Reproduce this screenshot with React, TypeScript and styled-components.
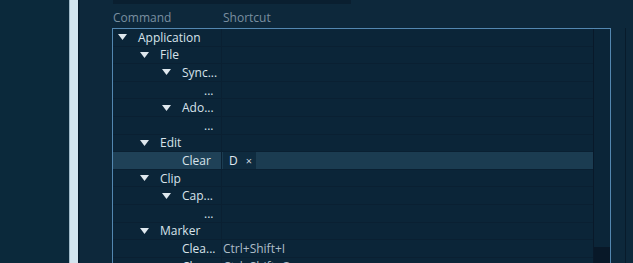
import React from "react";
import styled, { createGlobalStyle } from "styled-components";

const GlobalStyle = createGlobalStyle`
  html, body {
    margin: 0;
    padding: 0;
    background: #0b293b;
    overflow: hidden;
  }
  body {
    font-family: "Open Sans", "Noto Sans", sans-serif;
    font-size: 12px;
  }
`;

const Page = styled.div`
  display: flex;
  width: 633px;
  height: 263px;
  overflow: hidden;
`;

const LeftPane = styled.div`
  width: 69px;
  background: #0b293b;
`;

const Splitter = styled.div`
  width: 8px;
  background: #d3e4ee;
  border-left: 1px solid #9fb9c8;
  border-right: 1px solid #06182a;
`;

const Main = styled.div`
  flex: 1;
  display: flex;
  flex-direction: column;
  background: #0d283b;
  padding-left: 32px;
  border-left: 1px solid #0a2234;
  min-height: 0;
`;

const TopBar = styled.div`
  flex-shrink: 0;
  width: 238px;
  height: 4px;
  margin-left: 1px;
  background: #0a1f30;
`;

const HeaderRow = styled.div`
  flex-shrink: 0;
  display: flex;
  align-items: center;
  height: 24px;
  padding-left: 1px;
  padding-top: 2px;
  box-sizing: border-box;
  color: #7a8fa0;
`;

const HeaderCell = styled.div<{ $w?: number }>`
  width: ${(p) => (p.$w ? `${p.$w}px` : "auto")};
`;

const Body = styled.div`
  flex: 1;
  min-height: 0;
  display: flex;
  overflow: hidden;
`;

const TreeBox = styled.div`
  width: 499px;
  box-sizing: border-box;
  border: 1px solid #5387b0;
  border-bottom: none;
  display: flex;
  background: #0b2538;
`;

const Tree = styled.div`
  width: 480px;
  display: flex;
  flex-direction: column;
`;

const Row = styled.div<{ $selected?: boolean }>`
  display: flex;
  height: 17.6px;
  flex-shrink: 0;
  box-sizing: border-box;
  border-bottom: 1px solid #0a2032;
  background: ${(p) => (p.$selected ? "#1b3c51" : "transparent")};
  color: #d8e3eb;
`;

const CommandCell = styled.div<{ $level: number; $leaf?: boolean; $selected?: boolean }>`
  width: 109px;
  flex-shrink: 0;
  display: flex;
  align-items: center;
  box-sizing: border-box;
  padding-left: ${(p) => 5 + p.$level * 22 + (p.$leaf ? 20 : 0)}px;
  border-right: 1px solid #0a2032;
  background: ${(p) => (p.$selected ? "#1f4157" : "transparent")};
  white-space: nowrap;
  overflow: hidden;
`;

const Arrow = styled.svg`
  width: 9px;
  height: 6px;
  margin-right: 11px;
  flex-shrink: 0;
`;

const ShortcutCell = styled.div`
  flex: 1;
  display: flex;
  align-items: center;
  padding-left: 1px;
  color: #aebdc8;
  white-space: nowrap;
`;

const KeyEdit = styled.div`
  width: 33px;
  height: 100%;
  display: flex;
  align-items: center;
  padding-left: 6px;
  box-sizing: border-box;
  background: #0e2b3f;
  color: #e0e9ef;
  gap: 8px;
`;

const Clear = styled.span`
  font-size: 11px;
  color: #c9d6df;
`;

const ScrollTrack = styled.div`
  width: 16px;
  display: flex;
  flex-direction: column;
  background: #0b2538;
  border-left: 1px solid #09192a;
`;

const ScrollThumb = styled.div`
  margin-top: 218px;
  flex: 1;
  background: #081828;
`;

const RightStrip = styled.div`
  flex: 1;
  display: flex;
  justify-content: flex-end;
  padding-right: 7px;
`;

const RightEdge = styled.div`
  width: 1px;
  background: #081b2b;
`;

type Item = {
  label: string;
  level: number;
  leaf?: boolean;
  shortcut?: string;
  selected?: boolean;
};

const items: Item[] = [
  { label: "Application", level: 0 },
  { label: "File", level: 1 },
  { label: "Sync...", level: 2 },
  { label: "...", level: 3, leaf: true },
  { label: "Ado...", level: 2 },
  { label: "...", level: 3, leaf: true },
  { label: "Edit", level: 1 },
  { label: "Clear", level: 2, leaf: true, selected: true },
  { label: "Clip", level: 1 },
  { label: "Cap...", level: 2 },
  { label: "...", level: 3, leaf: true },
  { label: "Marker", level: 1 },
  { label: "Clea...", level: 2, leaf: true, shortcut: "Ctrl+Shift+I" },
  { label: "Clea...", level: 2, leaf: true, shortcut: "Ctrl+Shift+O" },
];

const Triangle = () => (
  <Arrow viewBox="0 0 9 6">
    <polygon points="0,0 9,0 4.5,6" fill="#dfe8ee" />
  </Arrow>
);

export default function App() {
  return (
    <>
      <GlobalStyle />
      <Page>
        <LeftPane />
        <Splitter />
        <Main>
          <TopBar />
          <HeaderRow>
            <HeaderCell $w={110}>Command</HeaderCell>
            <HeaderCell>Shortcut</HeaderCell>
          </HeaderRow>
          <Body>
            <TreeBox>
              <Tree>
                {items.map((it, i) => (
                  <Row key={i} $selected={it.selected}>
                    <CommandCell $level={it.level} $leaf={it.leaf} $selected={it.selected}>
                      {!it.leaf && <Triangle />}
                      {it.label}
                    </CommandCell>
                    <ShortcutCell>
                      {it.selected ? (
                        <KeyEdit>
                          D <Clear>×</Clear>
                        </KeyEdit>
                      ) : (
                        it.shortcut
                      )}
                    </ShortcutCell>
                  </Row>
                ))}
              </Tree>
              <ScrollTrack>
                <ScrollThumb />
              </ScrollTrack>
            </TreeBox>
            <RightStrip>
              <RightEdge />
            </RightStrip>
          </Body>
        </Main>
      </Page>
    </>
  );
}
